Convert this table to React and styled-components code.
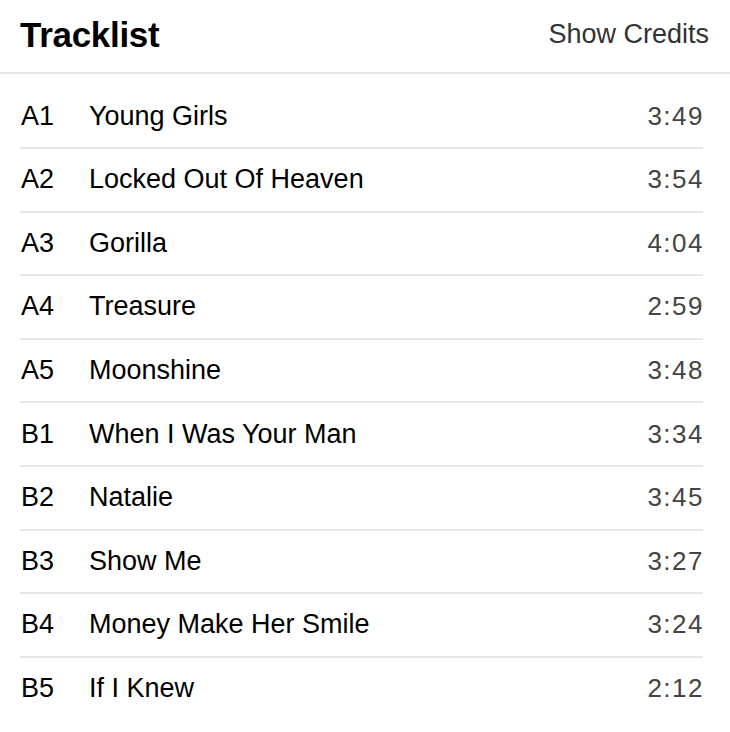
import React from 'react';
import styled, { createGlobalStyle } from 'styled-components';

const tracks = [
  { pos: 'A1', title: 'Young Girls', length: '3:49' },
  { pos: 'A2', title: 'Locked Out Of Heaven', length: '3:54' },
  { pos: 'A3', title: 'Gorilla', length: '4:04' },
  { pos: 'A4', title: 'Treasure', length: '2:59' },
  { pos: 'A5', title: 'Moonshine', length: '3:48' },
  { pos: 'B1', title: 'When I Was Your Man', length: '3:34' },
  { pos: 'B2', title: 'Natalie', length: '3:45' },
  { pos: 'B3', title: 'Show Me', length: '3:27' },
  { pos: 'B4', title: 'Money Make Her Smile', length: '3:24' },
  { pos: 'B5', title: 'If I Knew', length: '2:12' },
];

const App = () => {
  return (
    <>
      <GlobalStyle />
      <Page>
        <Header>
          <Title>Tracklist</Title>
          <CreditsButton>Show Credits</CreditsButton>
        </Header>
        <List>
          {tracks.map((track) => (
            <Row key={track.pos}>
              <Position>{track.pos}</Position>
              <TrackTitle>{track.title}</TrackTitle>
              <Length>{track.length}</Length>
            </Row>
          ))}
        </List>
      </Page>
    </>
  );
};

const GlobalStyle = createGlobalStyle`
  body {
    margin: 0;
    background: #ffffff;
    font-family: 'Liberation Sans', Arial, sans-serif;
  }
`;

const Page = styled.div`
  width: 730px;
  height: 732px;
  background: #ffffff;
  overflow: hidden;
`;

const Header = styled.header`
  display: flex;
  align-items: center;
  justify-content: space-between;
  height: 74px;
  padding: 0 21px 3px 20px;
  box-sizing: border-box;
  border-bottom: 2px solid #e6e6e6;
`;

const Title = styled.h1`
  margin: 0;
  font-size: 35px;
  font-weight: 700;
  color: #000;
  letter-spacing: -0.3px;
`;

const CreditsButton = styled.button`
  border: none;
  background: none;
  padding: 0;
  font-family: inherit;
  font-size: 27px;
  color: #333;
  cursor: pointer;
`;

const List = styled.ul`
  list-style: none;
  margin: 0;
  padding: 11.4px 27px 0 20px;
`;

const Row = styled.li`
  display: flex;
  align-items: center;
  height: 61.6px;
  border-bottom: 2px solid #e6e6e6;

  &:last-child {
    border-bottom: none;
  }
`;

const Position = styled.span`
  width: 68px;
  padding-left: 1px;
  font-size: 27px;
  color: #000;
`;

const TrackTitle = styled.span`
  flex: 1;
  font-size: 27px;
  color: #000;
`;

const Length = styled.span`
  margin-right: -1px;
  font-size: 26px;
  letter-spacing: 1.5px;
  color: #444;
`;

export default App;
